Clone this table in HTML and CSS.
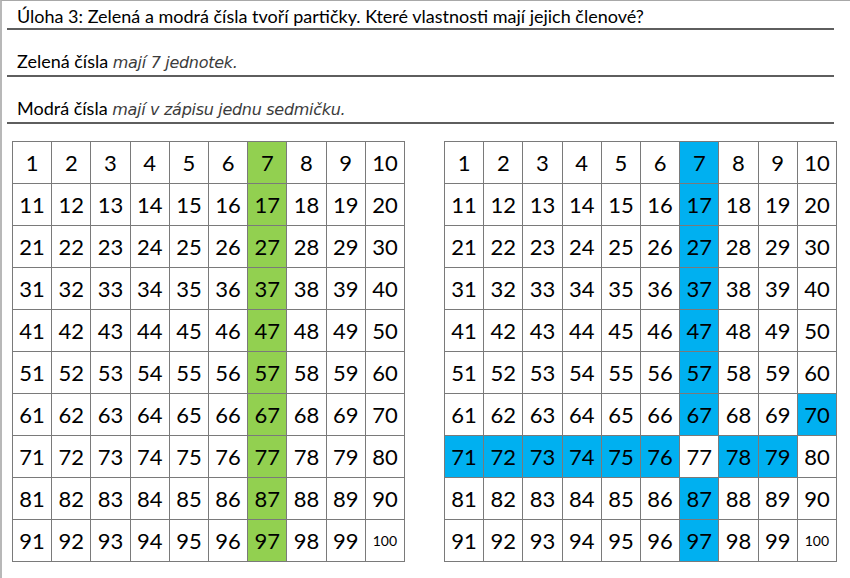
FILE: index.html
```html
<!DOCTYPE html>
<html lang="cs">
<head>
<meta charset="utf-8">
<title>Úloha 3</title>
<link rel="stylesheet" href="styles.css">
</head>
<body>
<div class="page">
  <div class="lines">
    <div class="line first"><span class="txt">Úloha 3: Zelená a modrá čísla tvoří partičky. Které vlastnosti mají jejich členové?</span></div>
    <div class="line"><span class="txt">Zelená čísla <span class="hand">mají 7 jednotek.</span></span></div>
    <div class="line"><span class="txt">Modrá čísla <span class="hand">mají v zápisu jednu sedmičku.</span></span></div>
  </div>
  <div class="grids">
    <div class="grid">
      <div class="c">1</div><div class="c">2</div><div class="c">3</div><div class="c">4</div><div class="c">5</div><div class="c">6</div><div class="c g">7</div><div class="c">8</div><div class="c">9</div><div class="c">10</div>
      <div class="c">11</div><div class="c">12</div><div class="c">13</div><div class="c">14</div><div class="c">15</div><div class="c">16</div><div class="c g">17</div><div class="c">18</div><div class="c">19</div><div class="c">20</div>
      <div class="c">21</div><div class="c">22</div><div class="c">23</div><div class="c">24</div><div class="c">25</div><div class="c">26</div><div class="c g">27</div><div class="c">28</div><div class="c">29</div><div class="c">30</div>
      <div class="c">31</div><div class="c">32</div><div class="c">33</div><div class="c">34</div><div class="c">35</div><div class="c">36</div><div class="c g">37</div><div class="c">38</div><div class="c">39</div><div class="c">40</div>
      <div class="c">41</div><div class="c">42</div><div class="c">43</div><div class="c">44</div><div class="c">45</div><div class="c">46</div><div class="c g">47</div><div class="c">48</div><div class="c">49</div><div class="c">50</div>
      <div class="c">51</div><div class="c">52</div><div class="c">53</div><div class="c">54</div><div class="c">55</div><div class="c">56</div><div class="c g">57</div><div class="c">58</div><div class="c">59</div><div class="c">60</div>
      <div class="c">61</div><div class="c">62</div><div class="c">63</div><div class="c">64</div><div class="c">65</div><div class="c">66</div><div class="c g">67</div><div class="c">68</div><div class="c">69</div><div class="c">70</div>
      <div class="c">71</div><div class="c">72</div><div class="c">73</div><div class="c">74</div><div class="c">75</div><div class="c">76</div><div class="c g">77</div><div class="c">78</div><div class="c">79</div><div class="c">80</div>
      <div class="c">81</div><div class="c">82</div><div class="c">83</div><div class="c">84</div><div class="c">85</div><div class="c">86</div><div class="c g">87</div><div class="c">88</div><div class="c">89</div><div class="c">90</div>
      <div class="c">91</div><div class="c">92</div><div class="c">93</div><div class="c">94</div><div class="c">95</div><div class="c">96</div><div class="c g">97</div><div class="c">98</div><div class="c">99</div><div class="c small">100</div>
    </div>
    <div class="grid">
      <div class="c">1</div><div class="c">2</div><div class="c">3</div><div class="c">4</div><div class="c">5</div><div class="c">6</div><div class="c b">7</div><div class="c">8</div><div class="c">9</div><div class="c">10</div>
      <div class="c">11</div><div class="c">12</div><div class="c">13</div><div class="c">14</div><div class="c">15</div><div class="c">16</div><div class="c b">17</div><div class="c">18</div><div class="c">19</div><div class="c">20</div>
      <div class="c">21</div><div class="c">22</div><div class="c">23</div><div class="c">24</div><div class="c">25</div><div class="c">26</div><div class="c b">27</div><div class="c">28</div><div class="c">29</div><div class="c">30</div>
      <div class="c">31</div><div class="c">32</div><div class="c">33</div><div class="c">34</div><div class="c">35</div><div class="c">36</div><div class="c b">37</div><div class="c">38</div><div class="c">39</div><div class="c">40</div>
      <div class="c">41</div><div class="c">42</div><div class="c">43</div><div class="c">44</div><div class="c">45</div><div class="c">46</div><div class="c b">47</div><div class="c">48</div><div class="c">49</div><div class="c">50</div>
      <div class="c">51</div><div class="c">52</div><div class="c">53</div><div class="c">54</div><div class="c">55</div><div class="c">56</div><div class="c b">57</div><div class="c">58</div><div class="c">59</div><div class="c">60</div>
      <div class="c">61</div><div class="c">62</div><div class="c">63</div><div class="c">64</div><div class="c">65</div><div class="c">66</div><div class="c b">67</div><div class="c">68</div><div class="c">69</div><div class="c b">70</div>
      <div class="c b">71</div><div class="c b">72</div><div class="c b">73</div><div class="c b">74</div><div class="c b">75</div><div class="c b">76</div><div class="c">77</div><div class="c b">78</div><div class="c b">79</div><div class="c">80</div>
      <div class="c">81</div><div class="c">82</div><div class="c">83</div><div class="c">84</div><div class="c">85</div><div class="c">86</div><div class="c b">87</div><div class="c">88</div><div class="c">89</div><div class="c">90</div>
      <div class="c">91</div><div class="c">92</div><div class="c">93</div><div class="c">94</div><div class="c">95</div><div class="c">96</div><div class="c b">97</div><div class="c">98</div><div class="c">99</div><div class="c small">100</div>
    </div>
  </div>
</div>
</body>
</html>
```
FILE: styles.css
```css
html, body {
  margin: 0;
  padding: 0;
  background: #ffffff;
}
body {
  width: 850px;
  height: 578px;
  overflow: hidden;
  box-sizing: border-box;
  border-top: 1px solid #a8a8a8;
  border-left: 2px solid #b8b8b8;
  font-family: Lato, "Open Sans", sans-serif;
  color: #000;
}
.page {
  display: flex;
  flex-direction: column;
}
.lines {
  display: flex;
  flex-direction: column;
  margin-left: 5px;
  width: 827px;
}
.line {
  height: 45px;
  box-sizing: content-box;
  border-bottom: 2px solid #5e5e5e;
  display: flex;
  align-items: flex-end;
  padding-left: 10px;
}
.line.first {
  height: 27px;
}
.txt {
  font-size: 18px;
  line-height: 20px;
  padding-bottom: 2px;
  white-space: nowrap;
}
.hand {
  font-family: "DejaVu Sans", sans-serif;
  font-style: italic;
  font-size: 16px;
  color: #3c3c3c;
  letter-spacing: -0.3px;
}
.grids {
  display: flex;
  gap: 39px;
  margin-top: 17px;
  margin-left: 10px;
}
.grid {
  display: grid;
  grid-template-columns: repeat(10, 1fr);
  grid-template-rows: repeat(10, 1fr);
  gap: 1px;
  padding: 1px;
  width: 393px;
  height: 421px;
  box-sizing: border-box;
  background: #7a7a7a;
}
.c {
  background: #ffffff;
  display: flex;
  align-items: center;
  justify-content: center;
  font-size: 22px;
  line-height: 1;
  padding-top: 1px;
}
.c.g {
  background: #92d050;
}
.c.b {
  background: #00b0f0;
}
.c.small {
  font-size: 14px;
}
```
